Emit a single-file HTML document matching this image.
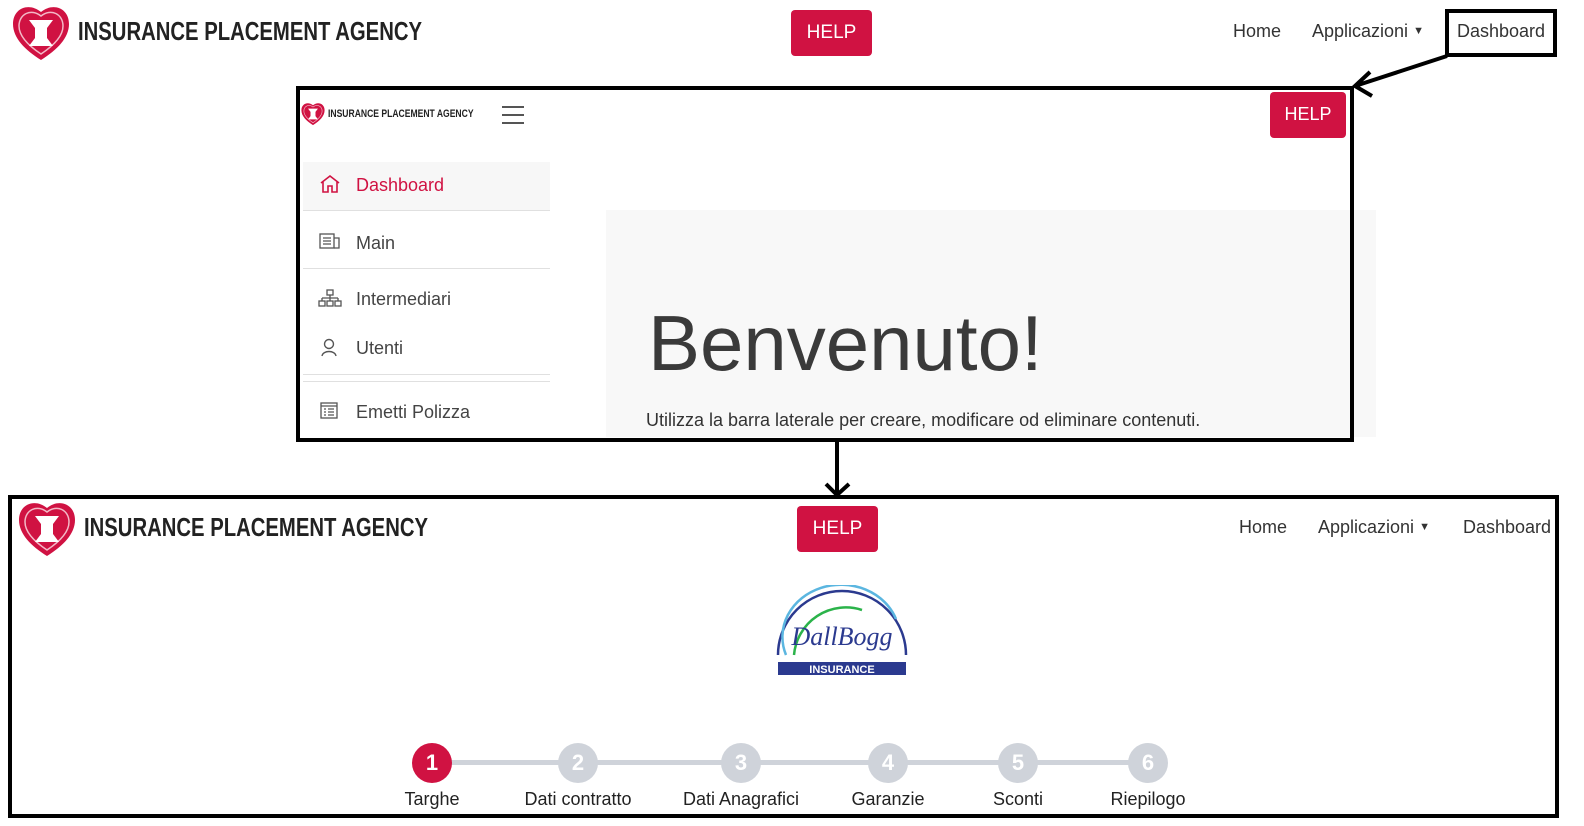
<!DOCTYPE html>
<html><head><meta charset="utf-8"><style>
*{margin:0;padding:0;box-sizing:border-box}
body{width:1584px;height:826px;background:#fff;position:relative;overflow:hidden;font-family:"Liberation Sans",sans-serif;color:#333}
.a{position:absolute}
.brand{font-family:"Liberation Sans",sans-serif;font-weight:bold;color:#222;transform:scaleX(0.78);transform-origin:left center;white-space:nowrap}
.help{background:#d01242;color:#fff;border-radius:4px;text-align:center;font-size:19px}
.nav{font-size:18px;color:#333}
.menu{font-size:18px;color:#444}
.step{width:40px;height:40px;border-radius:50%;background:#cfd3da;color:#fff;font-weight:bold;font-size:22px;text-align:center;line-height:40px}
.lbl{font-size:18px;color:#222;text-align:center;width:160px;margin-left:-80px}
</style></head><body>
<svg width="0" height="0" style="position:absolute"><defs>
<g id="logo"><path d="M30 8 C18 -2 2 4 2 20 C2 34 14 46 30 56 C46 46 58 34 58 20 C58 4 42 -2 30 8Z" fill="#d01242"/><path d="M30 12 C20 4 8 10 8 22 C8 32 18 42 30 50 C42 42 52 32 52 22 C52 10 40 4 30 12Z" fill="none" stroke="#f3b9c7" stroke-width="1.5"/><path d="M18 16 H42 L36 24 V34 L42 42 H18 L24 34 V24Z" fill="#fff"/></g></defs></svg>
<!-- top header -->
<svg class="a" style="left:10px;top:4px" width="62" height="58" viewBox="0 0 60 58"><use href="#logo"/></svg>
<div class="a brand" style="left:78px;top:16px;font-size:26px">INSURANCE PLACEMENT AGENCY</div>
<div class="a help" style="left:791px;top:10px;width:81px;height:46px;line-height:46px">HELP</div>
<div class="a nav" style="left:1233px;top:21px">Home</div>
<div class="a nav" style="left:1312px;top:21px">Applicazioni <span style="font-size:11px;vertical-align:3px">▼</span></div>
<div class="a" style="left:1445px;top:9px;width:112px;height:48px;border:4px solid #000"></div>
<div class="a nav" style="left:1457px;top:21px">Dashboard</div>
<!-- arrows -->
<svg class="a" style="left:0;top:0" width="1584" height="826">
<line x1="1447" y1="56" x2="1355" y2="86" stroke="#000" stroke-width="4"/>
<polyline points="1370,72 1355,86 1372,96" fill="none" stroke="#000" stroke-width="4"/>
<line x1="837" y1="441" x2="837" y2="494" stroke="#000" stroke-width="4"/>
<polyline points="826,484 837,495 849,484" fill="none" stroke="#000" stroke-width="4"/>
</svg>
<!-- middle frame -->
<div class="a" style="left:606px;top:210px;width:770px;height:227px;background:#f8f8f8"></div>
<div class="a" style="left:296px;top:86px;width:1058px;height:356px;border:4px solid #000"></div>
<svg class="a" style="left:300px;top:102px" width="26" height="24" viewBox="0 0 60 58"><use href="#logo"/></svg>
<div class="a brand" style="left:328px;top:108px;font-size:11px">INSURANCE PLACEMENT AGENCY</div>
<div class="a" style="left:502px;top:106px;width:22px;height:2px;background:#555;box-shadow:0 8px 0 #555,0 16px 0 #555"></div>
<div class="a help" style="left:1270px;top:92px;width:76px;height:46px;line-height:44px;font-size:18px">HELP</div>
<div class="a" style="left:303px;top:162px;width:247px;height:49px;background:#f7f7f7;border-bottom:1px solid #e0e0e0"></div>
<div class="a" style="left:303px;top:268px;width:247px;height:1px;background:#e0e0e0"></div>
<div class="a" style="left:303px;top:374px;width:247px;height:1px;background:#e0e0e0"></div>
<div class="a" style="left:303px;top:381px;width:247px;height:1px;background:#e0e0e0"></div>
<svg class="a" style="left:319px;top:174px" width="22" height="20" viewBox="0 0 22 20" fill="none" stroke="#d01242" stroke-width="1.6"><path d="M2 9 L11 2 L20 9 M4 8 V18 H9 V12 H13 V18 H18 V8"/></svg>
<div class="a menu" style="left:356px;top:175px;color:#d01242">Dashboard</div>
<svg class="a" style="left:319px;top:233px" width="22" height="16" viewBox="0 0 22 16" fill="none" stroke="#555" stroke-width="1.3"><rect x="1" y="1" width="14" height="14"/><path d="M15 5 H20 V15 H15 M4 5 H12 M4 8 H12 M4 11 H12"/></svg>
<div class="a menu" style="left:356px;top:233px">Main</div>
<svg class="a" style="left:318px;top:289px" width="24" height="18" viewBox="0 0 24 18" fill="none" stroke="#555" stroke-width="1.3"><rect x="9" y="1" width="6" height="5"/><path d="M12 6 V9 M4 9 H20 M4 9 V12 M12 9 V12 M20 9 V12"/><rect x="1" y="12" width="6" height="5"/><rect x="9" y="12" width="6" height="5"/><rect x="17" y="12" width="6" height="5"/></svg>
<div class="a menu" style="left:356px;top:289px">Intermediari</div>
<svg class="a" style="left:320px;top:338px" width="18" height="20" viewBox="0 0 18 20" fill="none" stroke="#555" stroke-width="1.4"><circle cx="9" cy="6" r="4.5"/><path d="M2 18 C3 12 15 12 16 18"/></svg>
<div class="a menu" style="left:356px;top:338px">Utenti</div>
<svg class="a" style="left:320px;top:402px" width="18" height="18" viewBox="0 0 18 18" fill="none" stroke="#555" stroke-width="1.3"><rect x="1" y="1" width="16" height="15"/><path d="M1 4 H17 M4 7 H6 M8 7 H14 M4 10 H6 M8 10 H14 M4 13 H6 M8 13 H14"/></svg>
<div class="a menu" style="left:356px;top:402px">Emetti Polizza</div>
<div class="a" style="left:648px;top:298px;font-size:78px;font-weight:normal;color:#3a3a3a">Benvenuto!</div>
<div class="a" style="left:646px;top:410px;font-size:18px;color:#333">Utilizza la barra laterale per creare, modificare od eliminare contenuti.</div>
<!-- bottom frame -->
<div class="a" style="left:8px;top:495px;width:1551px;height:323px;border:4px solid #000"></div>
<svg class="a" style="left:16px;top:500px" width="62" height="58" viewBox="0 0 60 58"><use href="#logo"/></svg>
<div class="a brand" style="left:84px;top:512px;font-size:26px">INSURANCE PLACEMENT AGENCY</div>
<div class="a help" style="left:797px;top:506px;width:81px;height:46px;line-height:46px">HELP</div>
<div class="a nav" style="left:1239px;top:517px">Home</div>
<div class="a nav" style="left:1318px;top:517px">Applicazioni <span style="font-size:11px;vertical-align:3px">▼</span></div>
<div class="a nav" style="left:1463px;top:517px">Dashboard</div>
<svg class="a" style="left:770px;top:585px" width="145" height="92" viewBox="0 0 145 92">
<path d="M8 70 A64 64 0 0 1 136 70" fill="none" stroke="#2b3a8f" stroke-width="2.5"/>
<path d="M16 70 A56 50 0 0 1 126 34" fill="none" stroke="#5bb6e0" stroke-width="2.5"/>
<path d="M24 70 A52 52 0 0 1 92 25" fill="none" stroke="#2bb34a" stroke-width="2.5"/>
<text x="72" y="60" text-anchor="middle" font-family="Liberation Serif,serif" font-style="italic" font-size="26" fill="#2b3a8f">DallBogg</text>
<rect x="8" y="77" width="128" height="13" fill="#2b3a8f"/>
<text x="72" y="88" text-anchor="middle" font-size="11" font-weight="bold" fill="#fff">INSURANCE</text>
</svg>
<div class="a" style="left:432px;top:760px;width:716px;height:5px;background:#cfd3da"></div>
<div class="a step" style="left:412px;top:743px;background:#d01242">1</div>
<div class="a step" style="left:558px;top:743px">2</div>
<div class="a step" style="left:721px;top:743px">3</div>
<div class="a step" style="left:868px;top:743px">4</div>
<div class="a step" style="left:998px;top:743px">5</div>
<div class="a step" style="left:1128px;top:743px">6</div>
<div class="a lbl" style="left:432px;top:789px">Targhe</div>
<div class="a lbl" style="left:578px;top:789px">Dati contratto</div>
<div class="a lbl" style="left:741px;top:789px">Dati Anagrafici</div>
<div class="a lbl" style="left:888px;top:789px">Garanzie</div>
<div class="a lbl" style="left:1018px;top:789px">Sconti</div>
<div class="a lbl" style="left:1148px;top:789px">Riepilogo</div>
</body></html>
